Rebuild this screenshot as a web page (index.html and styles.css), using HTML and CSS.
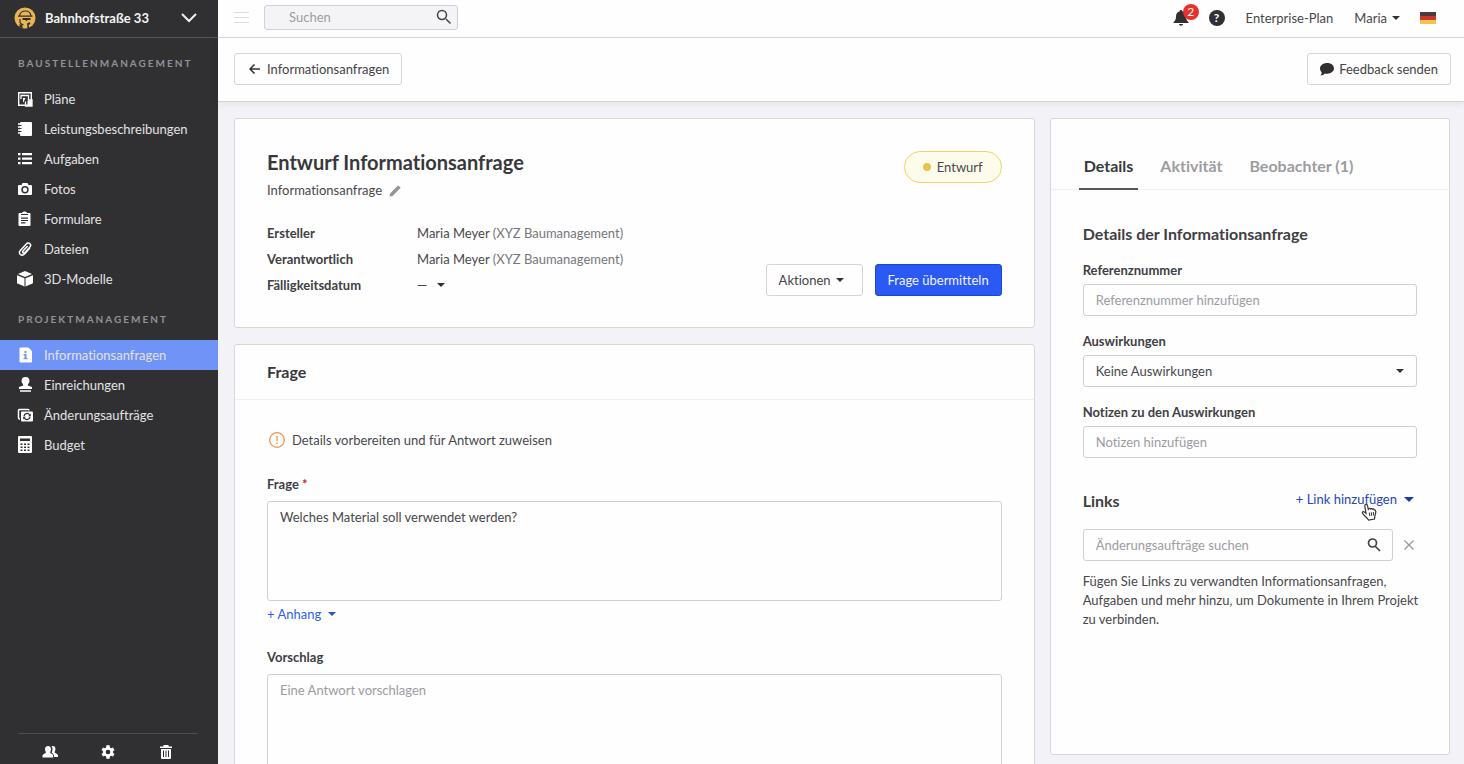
FILE: index.html
```
<!DOCTYPE html>
<html lang="de">
<head>
    <meta charset="UTF-8">
    <meta name="viewport" content="width=device-width, initial-scale=1.0">
    <title>Entwurf Informationsanfrage</title>
    <link rel="stylesheet" href="styles.css">
</head>
<body>

<aside class="sidebar">
    <button class="project">
        <svg class="logo" width="22" height="22" viewBox="0 0 22 22">
            <circle cx="11" cy="11" r="10.500" fill="#e9b553"/>
            <path d="M5.500 9C6 5.500 8.500 4 11.500 4s5 1.500 5.500 5M6 12v2.500c0 2 1.500 3 3.500 3.200" fill="none" stroke="#303032" stroke-width="1.200"/>
            <path d="M4 8.500h14.500v1.300H4zM8.500 11h8v2h-3l-1 1.200-1.300-1.200H8.500zM13 16.500l2.500-1.500 1 2-2 1 1 3-2 .5z" fill="#303032"/>
            <path d="M5.500 17l3 1.500v3l-3-1.500z" fill="#303032"/>
        </svg>
        <span>Bahnhofstraße 33</span>
        <svg class="chevron" width="16" height="10" viewBox="0 0 16 10"><path d="M1 1l7 7 7-7" fill="none" stroke="#f0f0f0" stroke-width="2"/></svg>
    </button>

    <nav>
        <h2>Baustellenmanagement</h2>
        <a href="#plaene">
            <svg viewBox="0 0 16 16"><path d="M1.700 1.700h12.600v12.600H1.700z" fill="none" stroke="#fff" stroke-width="1.400"/><path d="M4 8V4.500h7.500V9H15v6H8.500v-4.500" fill="none" stroke="#fff" stroke-width="1.300"/><path d="M8.500 7H6v5M10.500 9.500H15V15h-4.500z"/></svg>
            Pläne
        </a>
        <a href="#leistungen">
            <svg viewBox="0 0 16 16"><rect x="3" y="1" width="12" height="14" rx="1"/><path d="M1 3h3M1 6h3M1 9h3M1 12h3" stroke="#fff" stroke-width="1.500"/><path d="M3 4.500h1.500M3 7.500h1.500M3 10.500h1.500" stroke="#303032"/></svg>
            Leistungsbeschreibungen
        </a>
        <a href="#aufgaben">
            <svg viewBox="0 0 16 16"><path d="M1 2h2.500v2.200H1zM5 2h10v2.200H5zM1 6.500h2.500v2.200H1zM5 6.500h10v2.200H5zM1 11h2.500v2.200H1zM5 11h10v2.200H5z"/></svg>
            Aufgaben
        </a>
        <a href="#fotos">
            <svg viewBox="0 0 16 16"><path fill-rule="evenodd" d="M5.500 2h5l1 2H14a1 1 0 0 1 1 1v8a1 1 0 0 1-1 1H2a1 1 0 0 1-1-1V5a1 1 0 0 1 1-1h2.500zM8 5a3.700 3.700 0 1 0 0 7.400A3.700 3.700 0 0 0 8 5zm0 1.500a2.200 2.200 0 1 1 0 4.400 2.200 2.200 0 0 1 0-4.400z"/></svg>
            Fotos
        </a>
        <a href="#formulare">
            <svg viewBox="0 0 16 16"><path fill-rule="evenodd" d="M2.500 2H5C5.500 0 9.500 0 10 2h2.500a1 1 0 0 1 1 1v11a1 1 0 0 1-1 1h-10a1 1 0 0 1-1-1V3a1 1 0 0 1 1-1zm1.500 1v1h7V3zM4 6.500v1.200h7V6.500zm0 2.400v1.200h7V8.900zm0 2.400v1.200h4.500v-1.200z"/></svg>
            Formulare
        </a>
        <a href="#dateien">
            <svg viewBox="0 0 16 16"><path d="M12.500 7.500l-5 5.500c-1.500 1.500-3 1.300-4.200.4-1.200-1-1.200-2.600 0-4l6-6.400c1-1.200 2.600-1.200 3.600-.3 1 1 .9 2.300 0 3.300L8 11.500c-.7.700-1.400.7-2 .2-.5-.5-.4-1.200.2-1.900l4-4.300" fill="none" stroke="#fff" stroke-width="1.500" stroke-linecap="round"/></svg>
            Dateien
        </a>
        <a href="#modelle">
            <svg viewBox="0 0 16 16"><path d="M8 0l7 3-7 3-7-3zM0 4.200l7.500 3V15.500L0 12.200zM16 4.200l-7.500 3V15.500l7.500-3.300z"/></svg>
            3D-Modelle
        </a>

        <h2>Projektmanagement</h2>
        <a href="#informationsanfragen" class="active">
            <svg viewBox="0 0 16 16"><path fill-rule="evenodd" d="M3.500.500h8L15 4v10.500a1 1 0 0 1-1 1H3.500a1 1 0 0 1-1-1v-13a1 1 0 0 1 1-1zM7.500 4v2h2V4zM6.500 7v1.300h1V11h-1v1.300h4V11h-1V7z"/></svg>
            Informationsanfragen
        </a>
        <a href="#einreichungen">
            <svg viewBox="0 0 16 16"><path d="M8.500 0a4 4 0 0 1 4 4c0 2-1.500 2.800-1.800 4.500L15 10v2H2v-2l4.300-1.500C6 6.800 4.500 6 4.500 4a4 4 0 0 1 4-4zM3 13.200h11v1.600H3z"/></svg>
            Einreichungen
        </a>
        <a href="#aenderungen">
            <svg viewBox="0 0 16 16"><path d="M3 12H2.500a1 1 0 0 1-1-1V3.500a1 1 0 0 1 1-1H11a1 1 0 0 1 1 1" fill="none" stroke="#fff" stroke-width="1.500"/><rect x="4" y="4.500" width="12" height="10" rx="1"/><path d="M7 9.200a3 3 0 0 1 5.600-1.200M13 9.800a3 3 0 0 1-5.600 1.200" fill="none" stroke="#303032" stroke-width="1.300"/><path d="M13.800 6.500v2.700h-2.700zM6.200 12.500V9.800h2.700z" fill="#303032"/></svg>
            Änderungsaufträge
        </a>
        <a href="#budget">
            <svg viewBox="0 0 16 16"><path fill-rule="evenodd" d="M2 -1h12a1 1 0 0 1 1 1v15a1 1 0 0 1-1 1H2a1 1 0 0 1-1-1V0a1 1 0 0 1 1-1zm1 2.500v2.500h10V1.500zM3.500 6.500V8h2V6.500zm3.500 0V8h2V6.500zm3.500 0V8h2V6.500zm-7 3v1.500h2V9.500zm3.500 0v1.500h2V9.500zm3.500 0v1.500h2V9.500zm-7 3V14h2v-1.500zm3.500 0V14h2v-1.500zm3.500 0V14h2v-1.500z"/></svg>
            Budget
        </a>
    </nav>

    <div class="sidebar-footer">
        <button aria-label="Personen">
            <svg width="16" height="16" viewBox="0 0 16 16"><path d="M6 2c2 0 3 1.300 3 3.200 0 1.500-.8 2.300-.8 3.300 0 1.200 3 1.200 3 3.500V13.500H.5V12c0-2.300 3.300-2.300 3.300-3.500 0-1-.8-1.800-.8-3.300C3 3.300 4 2 6 2z"/><path d="M9.500 2.300c2.500-.8 4 .7 4 2.700 0 1.500-.8 2.200-.8 3.200 0 1.200 3.300 1.300 3.300 3.300v1.500h-3.800c0-2.500-1-3-2.500-4.300 1-2 1.300-4.700-.2-6.400z"/></svg>
        </button>
        <button aria-label="Einstellungen">
            <svg width="16" height="16" viewBox="0 0 24 24"><path d="M19.400 13l.1-1-.1-1 2.400-1.800-2.300-4-2.900 1.200-1.800-1L14.400 2H9.600l-.4 3.300-1.800 1-2.900-1.200-2.300 4L4.600 11l-.1 1 .1 1-2.400 1.900 2.300 4 2.900-1.200 1.800 1 .4 3.300h4.800l.4-3.300 1.800-1 2.900 1.200 2.300-4zM12 15.500a3.500 3.500 0 1 1 0-7 3.500 3.500 0 0 1 0 7z"/></svg>
        </button>
        <button aria-label="Papierkorb">
            <svg width="16" height="16" viewBox="0 0 16 16"><path fill-rule="evenodd" d="M5.500 1h5v1.500H14V4H2V2.500h3.500zM3 5h10v9a1 1 0 0 1-1 1H4a1 1 0 0 1-1-1zm2 1.500v6.500h1V6.500zm2.500 0v6.500h1V6.500zm2.500 0v6.500h1V6.500z"/></svg>
        </button>
    </div>
</aside>

<div class="page">
    <header class="topbar">
        <button class="menu" aria-label="Menü"><svg width="15" height="12" viewBox="0 0 15 12"><path d="M0 .5h15M0 5.500h15M0 10.500h15" stroke="#dcdce0"/></svg></button>
        <div class="search top-search">
            <input type="text" placeholder="Suchen" aria-label="Suchen">
            <svg width="16" height="16" viewBox="0 0 16 16"><path d="M10 10l4.500 4.500M10.500 6a4.500 4.500 0 1 1-9 0 4.500 4.500 0 0 1 9 0z" fill="none" stroke="#444" stroke-width="1.500"/></svg>
        </div>
        <div class="account">
            <button class="bell" aria-label="Mitteilungen">
                <svg width="16" height="16" viewBox="0 0 16 16"><path d="M8 0c.8 0 1.200.5 1.200 1.200C12 2 13 4 13 6.500c0 3 1 4.500 2.500 5.500v1H.5v-1C2 11 3 9.500 3 6.500 3 4 4 2 6.800 1.200 6.800.5 7.200 0 8 0zM6 14h4c0 2.300-4 2.300-4 0z" fill="#303032"/></svg>
                <span class="count">2</span>
            </button>
            <button class="help" aria-label="Hilfe">?</button>
            <a href="#plan">Enterprise-Plan</a>
            <button class="user">Maria <span class="caret"></span></button>
            <svg class="flag" width="16" height="12" viewBox="0 0 16 12"><path d="M0 0h16v4H0z" fill="#4b3b3b"/><path d="M0 4h16v4H0z" fill="#cf352c"/><path d="M0 8h16v4H0z" fill="#efc54f"/></svg>
        </div>
    </header>

    <div class="actionbar">
        <button class="btn back">
            <svg width="12" height="10" viewBox="0 0 12 10"><path d="M5.500.500L1 5l4.500 4.500M1 5h10" fill="none" stroke="#303032" stroke-width="1.500"/></svg>
            Informationsanfragen
        </button>
        <button class="btn">
            <svg width="14" height="13" viewBox="0 0 14 13"><path d="M7.300 0C11 0 14 2.200 14 5.300s-3 5.400-6.700 5.400c-.9 0-1.700-.1-2.400-.3C4 11.500 2.500 12.300.5 12.500c.8-.9 1.200-1.900 1.200-3.200C.6 8.300 0 6.900 0 5.300 0 2.200 3.500 0 7.300 0z" fill="#303032"/></svg>
            Feedback senden
        </button>
    </div>

    <main>
        <div class="column">
            <section class="card summary">
                <div>
                    <h1>Entwurf Informationsanfrage</h1>
                    <p class="type">Informationsanfrage
                        <svg width="12" height="12" viewBox="0 0 12 12"><path d="M.5 11.500l.6-3L8.800.8c.6-.6 1.700.5 2.400 1.200.5.500.5.900 0 1.300L3.500 10.900z" fill="#949498"/></svg>
                    </p>
                    <dl>
                        <dt>Ersteller</dt>
                        <dd>Maria Meyer <span>(XYZ Baumanagement)</span></dd>
                        <dt>Verantwortlich</dt>
                        <dd>Maria Meyer <span>(XYZ Baumanagement)</span></dd>
                        <dt>Fälligkeitsdatum</dt>
                        <dd><button class="date">— <i class="caret"></i></button></dd>
                    </dl>
                </div>
                <div class="summary-side">
                    <span class="status">Entwurf</span>
                    <div class="buttons">
                        <button class="btn">Aktionen <span class="caret"></span></button>
                        <button class="btn primary">Frage übermitteln</button>
                    </div>
                </div>
            </section>

            <section class="card">
                <h2 class="card-title">Frage</h2>
                <div class="card-body">
                    <p class="hint">
                        <svg width="16" height="16" viewBox="0 0 16 16"><circle cx="8" cy="8" r="7.300" fill="none" stroke="#ef9350" stroke-width="1.300"/><path d="M8 4v5M8 10.500V12" stroke="#ef9350" stroke-width="1.300"/></svg>
                        Details vorbereiten und für Antwort zuweisen
                    </p>
                    <label for="frage">Frage <span class="required">*</span></label>
                    <textarea id="frage">Welches Material soll verwendet werden?</textarea>
                    <button class="link attach">+ Anhang <span class="caret"></span></button>
                    <label for="vorschlag">Vorschlag</label>
                    <textarea id="vorschlag" placeholder="Eine Antwort vorschlagen"></textarea>
                </div>
            </section>
        </div>

        <aside class="card details">
            <div class="tabs">
                <button class="tab active">Details</button>
                <button class="tab">Aktivität</button>
                <button class="tab">Beobachter (1)</button>
            </div>
            <div class="details-body">
                <h3>Details der Informationsanfrage</h3>
                <label for="referenz">Referenznummer</label>
                <input type="text" id="referenz" placeholder="Referenznummer hinzufügen">
                <label for="auswirkungen">Auswirkungen</label>
                <div class="select">
                    <select id="auswirkungen">
                        <option>Keine Auswirkungen</option>
                    </select>
                    <span class="caret"></span>
                </div>
                <label for="notizen">Notizen zu den Auswirkungen</label>
                <input type="text" id="notizen" placeholder="Notizen hinzufügen">

                <div class="links-head">
                    <h3>Links</h3>
                    <button class="link add-link">
                        + Link hinzufügen <span class="caret"></span>
                        <svg class="pointer" width="16" height="18" viewBox="0 0 16 18"><path d="M4.500 1.500c1-.5 1.800 0 2 1l.8 4 .7-.8c.7-.5 1.300-.2 1.600.3.700-.6 1.500-.4 1.900.2.800-.4 1.500 0 1.800.6.900 0 1.500.5 1.500 1.700 0 2.500-.8 3.500-1 5l-.3 2.500-6 1c-1-2-4.800-4.500-6-6.700-.5-1.500 1-2.200 2-1.300l1.500 1.200L3.800 3c-.1-.7.100-1.200.7-1.500z" fill="#fff" stroke="#333" stroke-width="1.200"/><path d="M8.300 9.500l.5 3.500M10.300 9.300l.4 3.500M12.300 9l.2 3.500" stroke="#333"/></svg>
                    </button>
                </div>
                <div class="link-row">
                    <div class="search">
                        <input type="text" placeholder="Änderungsaufträge suchen" aria-label="Änderungsaufträge suchen">
                        <svg width="16" height="16" viewBox="0 0 16 16"><path d="M9.500 9.500L14 14M10.500 6a4 4 0 1 1-8 0 4 4 0 0 1 8 0z" fill="none" stroke="#444" stroke-width="1.700"/></svg>
                    </div>
                    <button class="close" aria-label="Schließen"><svg width="10" height="10" viewBox="0 0 10 10"><path d="M.5.500l9 9M9.500.500l-9 9" stroke="#999" stroke-width="1.300"/></svg></button>
                </div>
                <p class="note">Fügen Sie Links zu verwandten Informationsanfragen, Aufgaben und mehr hinzu, um Dokumente in Ihrem Projekt zu verbinden.</p>
            </div>
        </aside>
    </main>
</div>

</body>
</html>
```
FILE: styles.css
```
* {
    box-sizing: border-box;
}

body {
    font-family: Lato, "Liberation Sans", sans-serif;
    font-size: 13px;
    font-variant-ligatures: none;
    line-height: 18px;
    margin: 0;
    height: 100vh;
    display: flex;
    overflow: hidden;
    background-color: #f3f3f7;
    color: #48484c;
}

h1, h2, h3, p, dl, dd {
    margin: 0;
}

button, input, select, textarea {
    font: inherit;
    font-variant-ligatures: none;
    color: inherit;
    margin: 0;
}

button {
    background: none;
    border: none;
    padding: 0;
    cursor: pointer;
}

a {
    color: inherit;
    text-decoration: none;
}

svg {
    flex-shrink: 0;
}

.caret {
    display: inline-block;
    border: 4px solid transparent;
    border-top: 4px solid #303032;
    border-bottom: 0;
}

/* Sidebar */

.sidebar {
    width: 218px;
    flex-shrink: 0;
    display: flex;
    flex-direction: column;
    background-color: #303032;
    color: #e2e2e4;
}

.project {
    display: flex;
    align-items: center;
    height: 38px;
    padding: 0 21px 1px 14px;
    border-bottom: 1px solid #555558;
    font-weight: bold;
    color: #f4f4f4;
}

.project span {
    margin-left: 9px;
}

.chevron {
    margin-left: auto;
}

.sidebar h2 {
    height: 46px;
    padding: 4px 18px 0;
    line-height: 42px;
    font-size: 10px;
    letter-spacing: 2px;
    text-transform: uppercase;
    color: #929296;
}

.sidebar nav a {
    display: flex;
    align-items: center;
    gap: 11px;
    height: 30px;
    padding: 0 17px;
}

.sidebar nav svg {
    width: 16px;
    height: 16px;
    fill: #fff;
    overflow: visible;
}

.sidebar nav a.active {
    background-color: #7093f8;
}

.sidebar-footer {
    display: flex;
    align-items: flex-start;
    justify-content: center;
    gap: 42px;
    height: 31px;
    margin: auto 20px 0 18px;
    padding-top: 10px;
    border-top: 1px solid #4c4c50;
}

.sidebar-footer svg {
    display: block;
    fill: #fff;
}

/* Top bar */

.page {
    flex: 1;
    min-width: 0;
    display: flex;
    flex-direction: column;
}

.topbar {
    display: flex;
    align-items: center;
    height: 38px;
    padding: 0 28px 2px 16px;
    background-color: #fefefe;
    border-bottom: 1px solid #d8d8da;
}

.menu svg {
    display: block;
}

.search {
    position: relative;
    flex: 1;
}

.search svg {
    position: absolute;
    right: 11px;
    top: 8px;
}

.top-search {
    flex: none;
    width: 194px;
    margin: 0 auto 0 15px;
}

.top-search input[type="text"] {
    display: block;
    height: 25px;
    padding: 0 24px 1px;
    background-color: #f4f4f7;
}

.top-search svg {
    right: 6px;
    top: 4px;
}

.account {
    display: flex;
    align-items: center;
}

.bell {
    position: relative;
    height: 16px;
}

.bell svg {
    display: block;
}

.count {
    position: absolute;
    left: 10px;
    top: -6px;
    width: 16px;
    height: 16px;
    border-radius: 8px;
    background-color: #e5322a;
    color: #fff;
    font-size: 12px;
    line-height: 16px;
}

.help {
    width: 16px;
    height: 16px;
    margin: 0 21px 0 20px;
    border-radius: 8px;
    background-color: #303032;
    color: #fff;
    font-size: 12px;
    font-weight: bold;
    line-height: 16px;
}

.user {
    display: flex;
    align-items: center;
    gap: 5px;
    margin: 0 20px 0 21px;
}

.actionbar {
    position: relative;
    display: flex;
    justify-content: space-between;
    padding: 15px 13px 16px 16px;
    background-color: #fefefe;
    border-bottom: 1px solid #d4d4d8;
    box-shadow: 0 2px 8px rgba(0, 0, 0, 0.07);
}

.btn {
    display: flex;
    align-items: center;
    gap: 5px;
    height: 32px;
    padding: 0 12px;
    border: 1px solid #d4d4de;
    border-radius: 3px;
    background-color: #fefefe;
    color: #444448;
}

.btn.back {
    gap: 6px;
    padding-left: 14px;
}

.btn.primary {
    background-color: #2b59f5;
    border-color: #1f45d0;
    color: #f2f4ff;
}

/* Content */

main {
    flex: 1;
    min-height: 0;
    display: grid;
    grid-template-columns: 2fr 1fr;
    gap: 15px;
    padding: 16px 14px 0 16px;
}

.column {
    min-height: 0;
    overflow: hidden;
}

.card {
    background-color: #fefefe;
    border: 1px solid #d6d6e2;
    border-radius: 3px;
}

.summary {
    display: flex;
    justify-content: space-between;
    padding: 32px 32px 31px;
    margin-bottom: 16px;
}

h1 {
    font-size: 20px;
    line-height: 22px;
    color: #38383c;
}

.type {
    margin: 8px 0 25px;
}

.type svg {
    margin-left: 4px;
    vertical-align: -2px;
}

dl {
    display: grid;
    grid-template-columns: 150px auto;
    row-gap: 8px;
    padding-bottom: 2px;
}

dt, label {
    font-weight: bold;
    color: #404044;
}

dd span {
    color: #77777b;
}

.date {
    display: flex;
    align-items: center;
    gap: 10px;
}

.summary-side {
    display: flex;
    flex-direction: column;
    justify-content: space-between;
    align-items: flex-end;
}

.status {
    display: flex;
    align-items: center;
    gap: 6px;
    height: 32px;
    padding: 0 18px;
    border: 1px solid #f0d468;
    border-radius: 16px;
    background-color: #fdfcec;
}

.status::before {
    content: "";
    width: 8px;
    height: 8px;
    border-radius: 4px;
    background-color: #e9c54d;
}

.buttons {
    display: flex;
    gap: 12px;
}

.buttons .caret {
    margin-right: 6px;
}

.card-title {
    padding: 18px 32px;
    border-bottom: 1px solid #f0f0f3;
    font-size: 16px;
    color: #38383c;
}

.card-body {
    padding: 31px 32px;
}

.hint {
    display: flex;
    align-items: center;
    gap: 7px;
    margin: 0 0 26px 2px;
}

label {
    display: block;
}

.required {
    color: #c8281e;
}

input[type="text"], textarea, select {
    width: 100%;
    padding: 0 12px;
    border: 1px solid #cfcfd9;
    border-radius: 3px;
    background-color: #fefefe;
}

input[type="text"], select {
    height: 32px;
}

textarea {
    display: block;
    height: 100px;
    margin-top: 8px;
    padding-top: 6px;
    resize: none;
}

::placeholder {
    color: #9c9ca2;
}

.link {
    display: flex;
    align-items: center;
    gap: 7px;
    color: #2f5ff0;
}

.link .caret {
    border-top-color: #2450d8;
}

.attach {
    margin: 4px 0 25px;
}

/* Details panel */

.details {
    margin-bottom: 9px;
}

.tabs {
    display: flex;
    gap: 17px;
    padding: 35px 28px 0;
    border-bottom: 1px solid #f0f0f3;
}

.tab {
    padding: 0 5px 10px;
    margin-bottom: -1px;
    border-bottom: 2px solid transparent;
    font-size: 16px;
    font-weight: bold;
    line-height: 24px;
    color: #9c9ca0;
}

.tab.active {
    color: #38383c;
    border-bottom-color: #55555e;
}

.details-body {
    padding: 33px 32px;
}

h3 {
    font-size: 16px;
    line-height: 22px;
    color: #404044;
}

.details-body label {
    margin: 16px 0 5px;
}

.details-body input, .details-body select {
    display: block;
}

.select {
    position: relative;
}

.select select {
    appearance: none;
}

.select .caret {
    position: absolute;
    right: 13px;
    top: 14px;
    pointer-events: none;
}

.links-head {
    display: flex;
    justify-content: space-between;
    align-items: flex-start;
    margin: 32px 0 17px;
}

.add-link {
    position: relative;
    padding-right: 3px;
    color: #2746b4;
}

.add-link .caret {
    border-width: 5px 5px 0;
    border-top-color: #1c3aa8;
}

.pointer {
    position: absolute;
    left: 65px;
    top: 13px;
}

.link-row {
    display: flex;
    align-items: center;
    gap: 8px;
}

.close {
    padding: 0 3px;
}

.note {
    margin: 11px -4px 0 0;
    line-height: 19px;
}
```
